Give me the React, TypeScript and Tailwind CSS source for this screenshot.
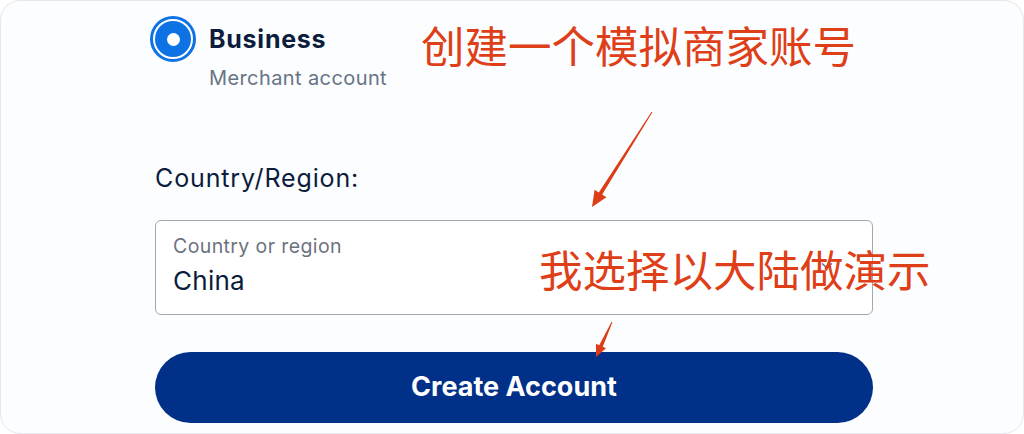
import { ChevronDown } from 'lucide-react';

const Arrow = ({ points, className }: { points: string; className: string }) => (
  <svg className={className} width="1024" height="434" viewBox="0 0 1024 434">
    <polygon points={points} fill="#dc3d16" />
  </svg>
);

export default function App() {
  return (
    <div className="relative w-[1024px] h-[434px] bg-white overflow-hidden font-['Inter',sans-serif]">
      <div className="h-full rounded-[20px] border border-[#e4e7eb] bg-[#fbfdfe] pl-[154px]">
        <div className="w-[718px]">
          {/* account type */}
          <div className="flex items-start gap-[13px] mt-[15px] -ml-[5px]">
            <div className="w-[46px] h-[46px] rounded-full border-[3px] border-[#0d72e4] p-[2px] bg-white shrink-0">
              <div className="w-full h-full rounded-full bg-[#0d72e4] flex items-center justify-center">
                <div className="w-[13px] h-[13px] rounded-full bg-white" />
              </div>
            </div>
            <div className="pt-[9px]">
              <div className="text-[25px] leading-[29px] font-bold tracking-[0.03em] text-[#0c1c3c]">Business</div>
              <div className="mt-[12px] text-[20px] leading-[24px] tracking-[0.02em] text-[#687385]">Merchant account</div>
            </div>
          </div>

          <div className="mt-[74px] text-[25px] leading-[28px] tracking-[0.035em] text-[#0c1c3c]">Country/Region:</div>

          {/* select */}
          <div className="relative mt-[28px] h-[95px] rounded-[6px] border border-[#a3a7ae] bg-white pl-[17px] pt-[13px]">
            <div className="text-[19.5px] leading-[24px] tracking-[0.02em] text-[#6c7380]">Country or region</div>
            <div className="mt-[8px] text-[26px] leading-[30px] tracking-[0.01em] text-[#0c1c3c]">China</div>
            <ChevronDown className="absolute right-[36px] top-[36px] text-[#6c7380]" size={18} strokeWidth={2} />
          </div>

          <button className="mt-[37px] w-full h-[71px] rounded-full bg-[#003087] text-white text-[27px] font-bold tracking-[0em]">
            Create Account
          </button>
        </div>
      </div>

      {/* annotations */}
      <div className="absolute left-[421px] top-[23px] text-[43.5px] leading-none text-[#de3f18] font-['Noto_Sans_CJK_SC',sans-serif] whitespace-nowrap">
        创建一个模拟商家账号
      </div>
      <div className="absolute left-[539px] top-[247px] text-[43.5px] leading-none text-[#de3f18] font-['Noto_Sans_CJK_SC',sans-serif] whitespace-nowrap">
        我选择以大陆做演示
      </div>
      <Arrow
        className="absolute left-0 top-0 pointer-events-none"
        points="592,207 594.6,189.8 598.8,192.4 651.6,111.7 652.4,112.3 602.2,194.6 606.4,197.2"
      />
      <Arrow
        className="absolute left-0 top-0 pointer-events-none"
        points="596,357 596,343.7 599.2,345.2 611.6,321.8 612.4,322.2 602.8,346.8 606,348.3"
      />
    </div>
  );
}
